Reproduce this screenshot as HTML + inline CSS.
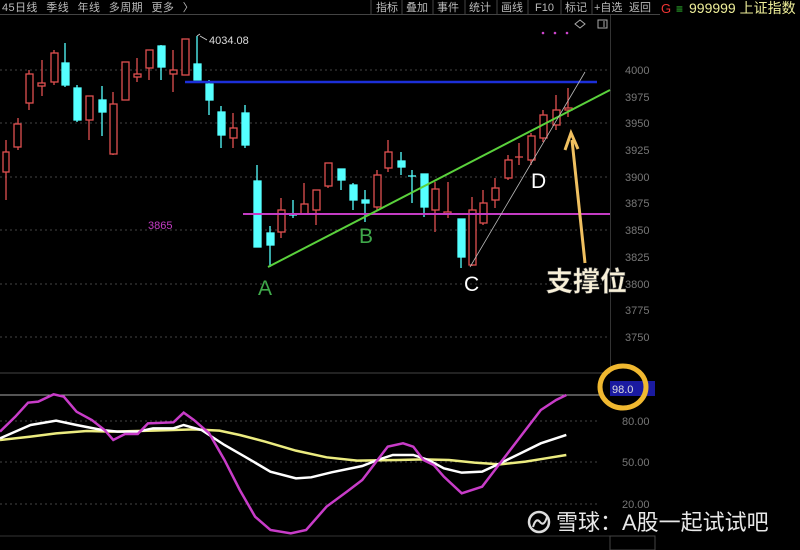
<!DOCTYPE html>
<html><head><meta charset="utf-8"><style>
body{margin:0;background:#000;width:800px;height:550px;overflow:hidden;font-family:"Liberation Sans","Noto Sans CJK SC",sans-serif}
svg{position:absolute;left:0;top:0}
</style></head><body>
<svg width="800" height="550" viewBox="0 0 800 550" font-family="Liberation Sans, Noto Sans CJK SC, sans-serif">
<rect width="800" height="550" fill="#000"/>
<line x1="0" y1="14.5" x2="660" y2="14.5" stroke="#444"/>
<text x="2" y="11" font-size="11" fill="#bbb" word-spacing="5" letter-spacing="0.4">45日线 季线 年线 多周期 更多 〉</text>
<g font-size="11" fill="#bbb">
<line x1="371" y1="0" x2="371" y2="14" stroke="#444"/>
<text x="376" y="11">指标</text><line x1="402" y1="0" x2="402" y2="14" stroke="#444"/>
<text x="406" y="11">叠加</text><line x1="433" y1="0" x2="433" y2="14" stroke="#444"/>
<text x="437" y="11">事件</text><line x1="465" y1="0" x2="465" y2="14" stroke="#444"/>
<text x="469" y="11">统计</text><line x1="497" y1="0" x2="497" y2="14" stroke="#444"/>
<text x="501" y="11">画线</text><line x1="528" y1="0" x2="528" y2="14" stroke="#444"/>
<text x="535" y="11">F10</text><line x1="561" y1="0" x2="561" y2="14" stroke="#444"/>
<text x="565" y="11">标记</text><line x1="592" y1="0" x2="592" y2="14" stroke="#444"/>
<text x="594" y="11">+自选</text>
<text x="629" y="11">返回</text>
</g>
<text x="661" y="13" font-size="13" fill="#e33">G</text>
<text x="676" y="13" font-size="12" fill="#3c3">≡</text>
<text x="689" y="13" font-size="14" fill="#ee9">999999 上证指数</text>
<line x1="610.5" y1="15" x2="610.5" y2="372" stroke="#333"/>
<path d="M580 20 l5 4 -5 4 -5 -4z" fill="none" stroke="#aaa"/>
<rect x="598" y="20" width="9" height="8" fill="none" stroke="#aaa"/><line x1="604" y1="21" x2="604" y2="27" stroke="#aaa"/>
<g fill="#c4c"><circle cx="543" cy="33" r="1.3"/><circle cx="555" cy="33" r="1.3"/><circle cx="567" cy="33" r="1.3"/></g>
<g stroke="#444" stroke-dasharray="2,3">
<line x1="0" y1="70" x2="610" y2="70"/><line x1="0" y1="123" x2="610" y2="123"/><line x1="0" y1="177" x2="610" y2="177"/>
<line x1="0" y1="230" x2="610" y2="230"/><line x1="0" y1="284" x2="610" y2="284"/><line x1="0" y1="337" x2="610" y2="337"/>
<line x1="0" y1="421" x2="600" y2="421"/><line x1="0" y1="462" x2="600" y2="462"/><line x1="0" y1="504" x2="600" y2="504"/>
</g>
<g font-size="11" fill="#777">
<text x="625" y="74">4000</text><text x="625" y="101">3975</text><text x="625" y="127">3950</text><text x="625" y="154">3925</text>
<text x="625" y="181">3900</text><text x="625" y="207">3875</text><text x="625" y="234">3850</text><text x="625" y="261">3825</text>
<text x="625" y="288">3800</text><text x="625" y="314">3775</text><text x="625" y="341">3750</text>
<text x="622" y="425">80.00</text><text x="622" y="466">50.00</text><text x="622" y="508">20.00</text>
</g>
<g stroke-width="1.3">
<g stroke="#e05050" fill="#000">
<line x1="6" y1="140" x2="6" y2="200"/><rect x="3" y="152" width="6" height="20"/>
<line x1="18" y1="118" x2="18" y2="150"/><rect x="14" y="124" width="7" height="23"/>
<line x1="29" y1="70" x2="29" y2="110"/><rect x="26" y="74" width="7" height="29"/>
<line x1="42" y1="60" x2="42" y2="96"/><rect x="38" y="83" width="7" height="3"/>
<line x1="54" y1="50" x2="54" y2="85"/><rect x="51" y="53" width="7" height="29"/>
<line x1="89" y1="96" x2="89" y2="140"/><rect x="86" y="96" width="7" height="24"/>
<line x1="113" y1="92" x2="113" y2="155"/><rect x="110" y="104" width="7" height="50"/>
<rect x="122" y="62" width="7" height="38"/>
<line x1="137" y1="58" x2="137" y2="82"/><rect x="134" y="74" width="7" height="3"/>
<line x1="149" y1="50" x2="149" y2="80"/><rect x="146" y="50" width="7" height="18"/>
<line x1="173" y1="50" x2="173" y2="92"/><rect x="170" y="70" width="7" height="4"/>
<rect x="182" y="39" width="7" height="36"/>
<line x1="233" y1="113" x2="233" y2="148"/><rect x="230" y="128" width="7" height="10"/>
<line x1="281" y1="198" x2="281" y2="238"/><rect x="278" y="210" width="7" height="22"/>
<line x1="304" y1="183" x2="304" y2="215"/><rect x="301" y="204" width="7" height="10"/>
<line x1="316" y1="190" x2="316" y2="225"/><rect x="313" y="190" width="7" height="20"/>
<line x1="328" y1="163" x2="328" y2="188"/><rect x="325" y="163" width="7" height="23"/>
<line x1="377" y1="170" x2="377" y2="210"/><rect x="374" y="175" width="7" height="32"/>
<line x1="388" y1="140" x2="388" y2="172"/><rect x="385" y="152" width="7" height="16"/>
<line x1="435" y1="182" x2="435" y2="232"/><rect x="432" y="189" width="7" height="21"/>
<line x1="448" y1="182" x2="448" y2="218"/><rect x="444" y="212" width="7" height="2"/>
<line x1="472" y1="197" x2="472" y2="266"/><rect x="469" y="210" width="7" height="55"/>
<line x1="483" y1="190" x2="483" y2="225"/><rect x="480" y="203" width="7" height="20"/>
<line x1="495" y1="178" x2="495" y2="208"/><rect x="492" y="188" width="7" height="12"/>
<line x1="508" y1="155" x2="508" y2="180"/><rect x="505" y="160" width="7" height="18"/>
<line x1="519" y1="143" x2="519" y2="165"/><line x1="515" y1="157" x2="523" y2="157"/>
<line x1="531" y1="133" x2="531" y2="165"/><rect x="528" y="136" width="7" height="24"/>
<line x1="543" y1="110" x2="543" y2="142"/><rect x="540" y="115" width="7" height="23"/>
<line x1="556" y1="95" x2="556" y2="130"/><rect x="553" y="110" width="7" height="15"/>
<line x1="568" y1="88" x2="568" y2="117"/><rect x="565" y="108" width="7" height="2"/>
</g>
<g stroke="#5ff" fill="#5ff">
<line x1="65" y1="43" x2="65" y2="87"/><rect x="62" y="63" width="7" height="22"/>
<line x1="77" y1="85" x2="77" y2="122"/><rect x="74" y="88" width="7" height="32"/>
<line x1="102" y1="86" x2="102" y2="136"/><rect x="99" y="100" width="7" height="12"/>
<line x1="161" y1="45" x2="161" y2="80"/><rect x="158" y="46" width="7" height="21"/>
<line x1="197" y1="36" x2="197" y2="80"/><rect x="194" y="64" width="7" height="16"/>
<line x1="209" y1="80" x2="209" y2="115"/><rect x="206" y="84" width="7" height="16"/>
<line x1="221" y1="106" x2="221" y2="148"/><rect x="218" y="112" width="7" height="23"/>
<line x1="245" y1="105" x2="245" y2="148"/><rect x="242" y="113" width="7" height="32"/>
<line x1="257" y1="165" x2="257" y2="247"/><rect x="254" y="181" width="7" height="66"/>
<line x1="270" y1="226" x2="270" y2="267"/><rect x="267" y="233" width="7" height="12"/>
<line x1="293" y1="200" x2="293" y2="218"/><line x1="289" y1="215" x2="297" y2="215"/>
<line x1="341" y1="169" x2="341" y2="190"/><rect x="338" y="169" width="7" height="11"/>
<line x1="353" y1="183" x2="353" y2="210"/><rect x="350" y="185" width="7" height="15"/>
<line x1="365" y1="190" x2="365" y2="222"/><rect x="362" y="200" width="7" height="3"/>
<line x1="401" y1="152" x2="401" y2="175"/><rect x="398" y="161" width="7" height="6"/>
<line x1="412" y1="170" x2="412" y2="203"/><line x1="408" y1="176" x2="416" y2="176"/>
<line x1="424" y1="174" x2="424" y2="217"/><rect x="421" y="174" width="7" height="33"/>
<line x1="461" y1="219" x2="461" y2="268"/><rect x="458" y="219" width="7" height="38"/>
</g>
</g>
<path d="M197 36 l3 -2 M200 36 l7 4" stroke="#ccc" fill="none"/>
<text x="209" y="44" font-size="11" fill="#ddd">4034.08</text>
<line x1="185" y1="82" x2="597" y2="82" stroke="#1c2fd8" stroke-width="2.5"/>
<line x1="243" y1="214" x2="610" y2="214" stroke="#c43cc4" stroke-width="2"/>
<line x1="268" y1="267" x2="610" y2="90" stroke="#5ad13c" stroke-width="2"/>
<line x1="470" y1="267" x2="585" y2="72" stroke="#bbb" stroke-width="0.8"/>
<line x1="585" y1="263" x2="572" y2="140" stroke="#f0c060" stroke-width="3"/>
<path d="M565 150 L571 133 L578 149" fill="none" stroke="#f0c060" stroke-width="3"/>
<text x="148" y="229" font-size="11" fill="#c43cc4">3865</text>
<text x="258" y="295" font-size="21" fill="#3fa84a">A</text>
<text x="359" y="243" font-size="21" fill="#3fa84a">B</text>
<text x="464" y="291" font-size="21" fill="#fff">C</text>
<text x="531" y="188" font-size="21" fill="#fff">D</text>
<text x="546" y="291" font-size="27" fill="#f8f0d8" font-weight="bold" stroke="#555" stroke-width="0.5">支撑位</text>
<line x1="0" y1="373" x2="610" y2="373" stroke="#444"/>
<line x1="0" y1="395" x2="600" y2="395" stroke="#aaa"/>
<line x1="0" y1="536" x2="610" y2="536" stroke="#333"/>
<rect x="610" y="536" width="45" height="14" fill="none" stroke="#444"/>
<g transform="translate(0,360) scale(0.5102,0.3333)" fill="none" stroke-width="2.5">
<polyline vector-effect="non-scaling-stroke" stroke="#ecec80" points="0,240 60,230 110,220 170,213 220,215 300,212 380,208 430,212 470,225 520,245 580,272 640,292 700,302 780,300 830,298 880,300 930,308 980,313 1030,305 1070,295 1110,285"/>
<polyline vector-effect="non-scaling-stroke" stroke="#fff" points="0,235 30,215 60,195 110,182 150,195 200,210 230,215 270,215 300,205 340,205 360,195 395,210 440,255 480,290 530,335 580,355 610,352 650,337 710,318 740,300 770,285 810,285 840,300 870,325 905,338 945,335 980,310 1020,280 1060,250 1110,225"/>
<polyline vector-effect="non-scaling-stroke" stroke="#c83cc8" points="0,215 30,170 55,128 75,125 105,103 125,110 150,155 180,180 205,210 222,240 245,222 270,222 290,190 340,187 360,158 380,180 410,220 440,300 470,390 500,470 530,510 570,520 600,510 640,440 680,395 710,360 740,300 760,260 790,250 810,260 830,300 850,315 870,350 905,400 945,380 975,320 1000,270 1030,210 1060,150 1090,120 1110,105"/>
</g>
<rect x="610" y="381" width="45" height="15" fill="#1a1aa0"/>
<text x="612" y="393" font-size="11" fill="#ddd">98.0</text>
<ellipse cx="623" cy="387" rx="23" ry="21" fill="none" stroke="#f0b830" stroke-width="5"/>
<circle cx="539" cy="522" r="10" fill="none" stroke="#ddd" stroke-width="2.5"/>
<path d="M533 527 q3 -10 7 -5 q4 5 7 -5" fill="none" stroke="#ddd" stroke-width="2"/>
<text x="556" y="530" font-size="22" fill="#e8e8e8">雪球：A股一起试试吧</text>
</svg>
</body></html>
